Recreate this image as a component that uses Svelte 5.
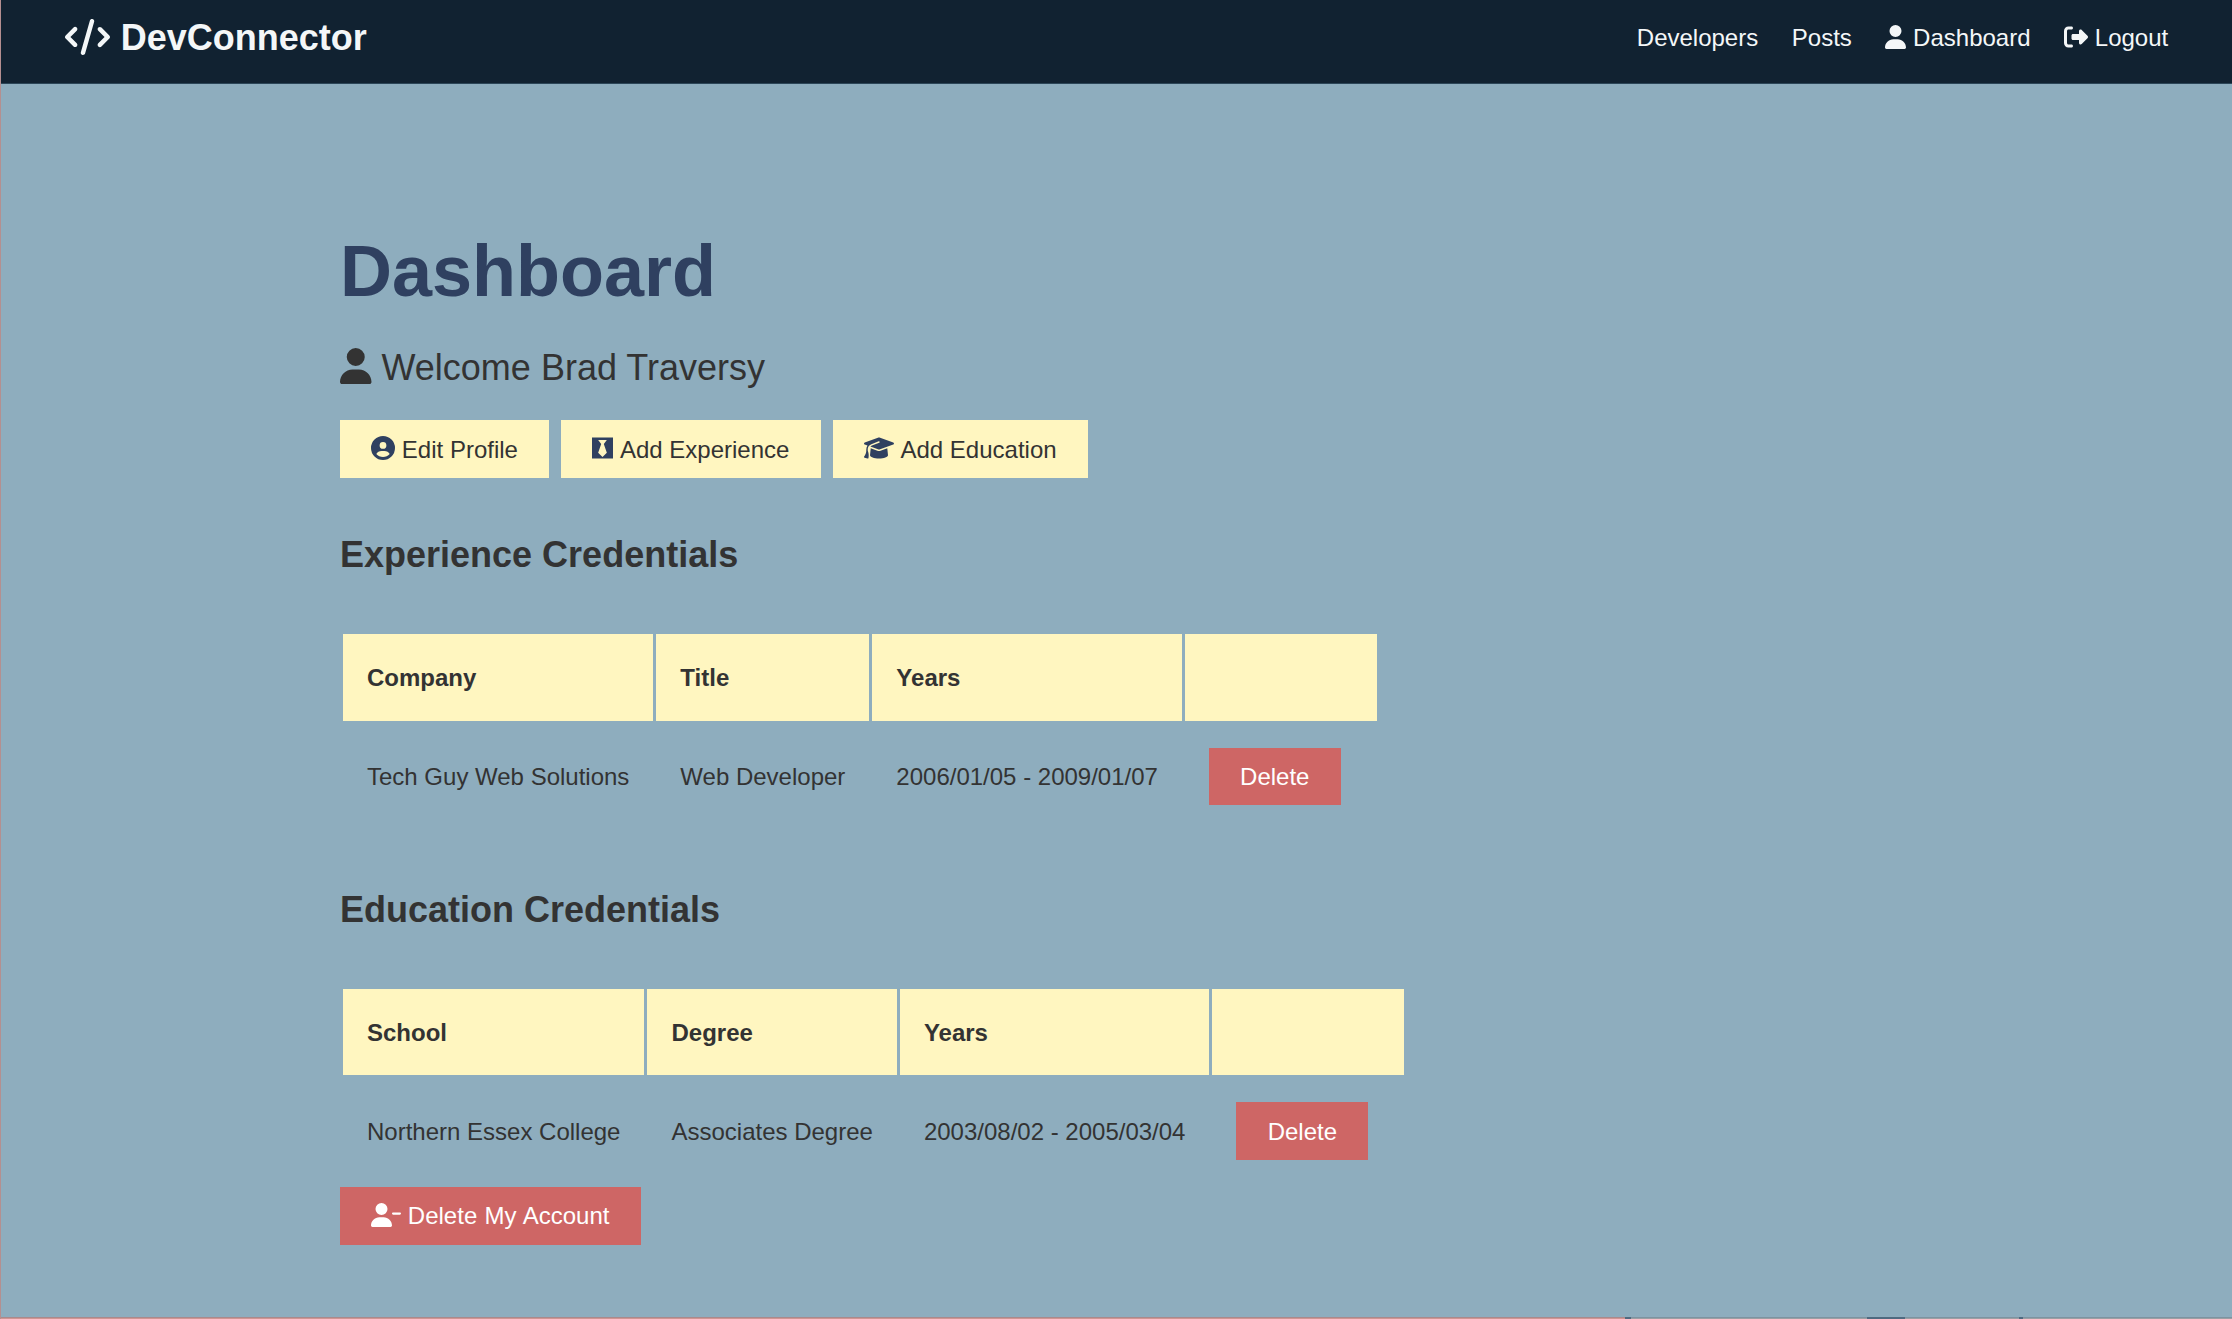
<script lang="ts">
  const icons = {
    code: { w: 640, d: 'M392.8 1.2c-17-4.9-34.7 5-39.6 22l-128 448c-4.9 17 5 34.7 22 39.6s34.7-5 39.6-22l128-448c4.9-17-5-34.7-22-39.6zm80.6 120.1c-12.5 12.5-12.5 32.8 0 45.3L562.7 256l-89.4 89.4c-12.5 12.5-12.5 32.8 0 45.3s32.8 12.5 45.3 0l112-112c12.5-12.5 12.5-32.8 0-45.3l-112-112c-12.5-12.5-32.8-12.5-45.3 0zm-306.7 0c-12.5-12.5-32.8-12.5-45.3 0l-112 112c-12.5 12.5-12.5 32.8 0 45.3l112 112c12.5 12.5 32.8 12.5 45.3 0s12.5-32.8 0-45.3L77.3 256l89.4-89.4c12.5-12.5 12.5-32.8 0-45.3z' },
    user: { w: 448, d: 'M224 256A128 128 0 1 0 224 0a128 128 0 1 0 0 256zm-45.7 48C79.8 304 0 383.8 0 482.3C0 498.7 13.3 512 29.7 512H418.3c16.4 0 29.7-13.3 29.7-29.7C448 383.8 368.2 304 269.7 304H178.3z' },
    logout: { w: 512, d: 'M377.9 105.9L500.7 228.7c7.2 7.2 11.3 17.1 11.3 27.3s-4.1 20.1-11.3 27.3L377.9 406.1c-6.4 6.4-15 9.9-24 9.9c-18.7 0-33.9-15.2-33.9-33.9l0-62.1-128 0c-17.7 0-32-14.3-32-32l0-64c0-17.7 14.3-32 32-32l128 0 0-62.1c0-18.7 15.2-33.9 33.9-33.9c9 0 17.6 3.6 24 9.9zM160 96L96 96c-17.7 0-32 14.3-32 32l0 256c0 17.7 14.3 32 32 32l64 0c17.7 0 32 14.3 32 32s-14.3 32-32 32l-64 0c-53 0-96-43-96-96L0 128C0 75 43 32 96 32l64 0c17.7 0 32 14.3 32 32s-14.3 32-32 32z' },
    profile: { w: 512, d: 'M399 384.2C376.9 345.8 335.4 320 288 320H224c-47.4 0-88.9 25.8-111 64.2c35.2 39.2 86.2 63.8 143 63.8s107.8-24.7 143-63.8zM0 256a256 256 0 1 1 512 0A256 256 0 1 1 0 256zm256 16a72 72 0 1 0 0-144 72 72 0 1 0 0 144z' },
    tie: { w: 448, d: 'M0 32v448h448V32H0zm316.5 325.2L224 445.9l-92.5-88.7 64.5-184-64.5-86.6h184.9L252 173.2l64.5 184z' },
    cap: { w: 640, d: 'M320 32c-8.1 0-16.1 1.4-23.7 4.1L15.8 137.4C6.3 140.9 0 149.9 0 160s6.3 19.1 15.8 22.6l57.9 20.9C57.3 229.3 48 259.8 48 291.9v28.1c0 28.4-10.8 57.7-22.3 80.8c-6.5 13-13.9 25.8-22.5 37.6C0 442.7-.9 448.3 .9 453.4s6 8.9 11.2 10.2l64 16c4.2 1.1 8.7 .3 12.4-2s6.3-6.1 7.1-10.4c8.6-42.8 4.3-81.2-2.1-108.7C90.3 344.3 86 329.8 80 316.5V291.9c0-30.2 10.2-58.7 27.9-81.5c12.9-15.5 29.6-28 49.2-35.7l157-61.7c8.2-3.2 17.5 .8 20.7 9s-.8 17.5-9 20.7l-157 61.7c-12.4 4.9-23.3 12.4-32.2 21.6l159.6 57.6c7.6 2.7 15.6 4.1 23.7 4.1s16.1-1.4 23.7-4.1L624.2 182.6c9.5-3.4 15.8-12.5 15.8-22.6s-6.3-19.1-15.8-22.6L343.7 36.1C336.1 33.4 328.1 32 320 32zM128 408c0 35.3 86 72 192 72s192-36.7 192-72L496.7 262.6 354.5 314c-11.1 4-22.8 6-34.5 6s-23.5-2-34.5-6L143.3 262.6 128 408z' },
    remove: { w: 640, d: 'M96 128a128 128 0 1 1 256 0A128 128 0 1 1 96 128zM0 482.3C0 383.8 79.8 304 178.3 304h91.4C368.2 304 448 383.8 448 482.3c0 16.4-13.3 29.7-29.7 29.7H29.7C13.3 512 0 498.7 0 482.3zM472 200H616c13.3 0 24 10.7 24 24s-10.7 24-24 24H472c-13.3 0-24-10.7-24-24s10.7-24 24-24z' }
  };
  type IconName = keyof typeof icons;

  const links: { label: string; icon?: IconName }[] = [
    { label: 'Developers' },
    { label: 'Posts' },
    { label: 'Dashboard', icon: 'user' },
    { label: 'Logout', icon: 'logout' }
  ];
  const actions: { label: string; icon: IconName }[] = [
    { label: 'Edit Profile', icon: 'profile' },
    { label: 'Add Experience', icon: 'tie' },
    { label: 'Add Education', icon: 'cap' }
  ];
  const sections = [
    {
      title: 'Experience Credentials',
      columns: ['Company', 'Title', 'Years', ''],
      rows: [['Tech Guy Web Solutions', 'Web Developer', '2006/01/05 - 2009/01/07']]
    },
    {
      title: 'Education Credentials',
      columns: ['School', 'Degree', 'Years', ''],
      rows: [['Northern Essex College', 'Associates Degree', '2003/08/02 - 2005/03/04']]
    }
  ];
</script>

{#snippet icon(name: IconName)}
  <svg class="icon" class:wide={icons[name].w === 640} class:narrow={icons[name].w === 448} viewBox="0 0 {icons[name].w} 512" aria-hidden="true"><path d={icons[name].d} /></svg>
{/snippet}

<div class="page">
  <nav class="navbar">
    <h1 class="brand"><a href="#home">{@render icon('code')}DevConnector</a></h1>
    <ul class="links">
      {#each links as link}
        <li><a href="#{link.label}">{#if link.icon}{@render icon(link.icon)}{/if}{link.label}</a></li>
      {/each}
    </ul>
  </nav>

  <main class="container">
    <h1 class="large">Dashboard</h1>
    <p class="lead">{@render icon('user')}Welcome Brad Traversy</p>
    <div class="actions">
      {#each actions as action}
        <a class="btn light" href="#{action.icon}">{@render icon(action.icon)}{action.label}</a>
      {/each}
    </div>

    {#each sections as section}
      <h2>{section.title}</h2>
      <table>
        <thead>
          <tr>{#each section.columns as column}<th>{column}</th>{/each}</tr>
        </thead>
        <tbody>
          {#each section.rows as row}
            <tr>
              {#each row as cell}<td>{cell}</td>{/each}
              <td class="action"><button class="btn danger">Delete</button></td>
            </tr>
          {/each}
        </tbody>
      </table>
    {/each}

    <button class="btn danger account">{@render icon('remove')}Delete My Account</button>
  </main>
  <div class="edge"><i class="rose"></i><i class="mark"></i><i class="mark broad"></i><i class="mark far"></i></div>
</div>

<style>
  :global(html) { font-size: 24px; }
  :global(body) { margin: 0; overflow: hidden; }
  .page {
    box-sizing: border-box;
    height: 1319px;
    display: flex;
    flex-direction: column;
    border-left: 1px solid #b48f90;
    background: #8eadbe;
    color: #333;
    font: 1rem/1.6 Arial, "Liberation Sans", sans-serif;
  }
  a { color: inherit; text-decoration: none; }
  h1, h2, p, ul { margin: 0; padding: 0; }
  .icon {
    width: 1em;
    height: 1em;
    margin-right: 0.278em;
    vertical-align: -0.125em;
    fill: currentColor;
    overflow: visible;
  }
  .icon.wide { width: 1.25em; }
  .icon.narrow { width: 0.875em; }

  .navbar {
    box-sizing: border-box;
    height: 84px;
    flex: none;
    display: flex;
    justify-content: space-between;
    align-items: center;
    padding: 0 47px 7px 47.5px;
    border-bottom: 1px solid #2c4658;
    background: #112231;
    color: #f4f7f8;
  }
  .navbar a { padding: 0.45rem; margin: 0 0.25rem; }
  .brand { font-size: 1.5rem; }
  .brand .icon { margin-right: 0.29em; }
  .links { display: flex; list-style: none; }

  .container {
    box-sizing: border-box;
    width: 1650px;
    flex: 1;
    min-height: 0;
    margin: 0 auto;
    padding: 144px 2rem 0 48.5px;
  }
  .large { font-size: 3rem; line-height: 1.2; margin-bottom: 1rem; color: #2f4060; }
  .lead { font-size: 1.5rem; padding-top: 1px; margin-bottom: 23px; }
  .lead .icon, .btn .icon { vertical-align: calc(-0.125em + 0.5px); }
  .actions { display: flex; }
  .btn {
    display: inline-block;
    padding: calc(0.4rem + 1px) 1.3rem calc(0.4rem - 1px);
    margin: 0 0.5rem 0 0;
    border: 0;
    font: inherit;
  }
  .light { background: #fff6c0; }
  .light .icon { color: #2f4060; }
  .danger { background: #ce6665; color: #fff; }
  td .btn, .account { display: block; }
  .account { padding-bottom: 0.4rem; word-spacing: 0.03em; }
  h2 { font-size: 1.5rem; margin: 2rem 0; }
  table + h2 { padding-top: 1px; margin-bottom: 47px; }
  table { border-spacing: 3px; }
  th, td { padding: calc(1rem + 1px) 1rem calc(1rem - 1px); text-align: left; white-space: nowrap; }
  td.action { padding: 1rem; }
  th { background: #fff6c0; }

  .edge { height: 2px; flex: none; display: flex; background: linear-gradient(#7d93a1 50%, #9b9fa3 50%); }
  .rose { width: 1624px; background: linear-gradient(#a9898d 50%, #d09692 50%); }
  .mark { width: 6px; background: #4f6a80; }
  .broad { width: 38px; margin-left: 236px; }
  .far { width: 4px; margin-left: 114px; }
</style>
